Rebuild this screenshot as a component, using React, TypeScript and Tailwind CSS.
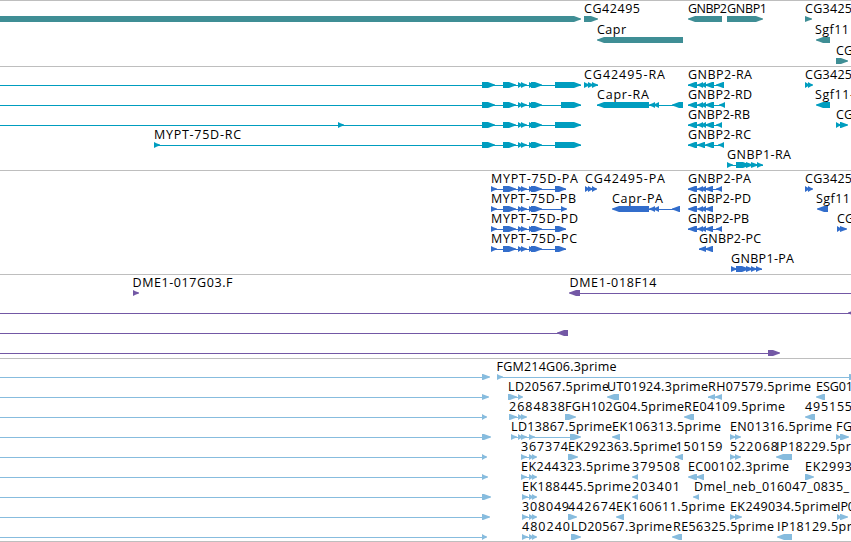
type Label = [x: number, text: string, width: number];
type Span = [start: number, end: number];

interface Row {
  labels?: Label[];
  lines?: Span[];
  // right and left are the strands the blocks point to
  right?: Span[];
  left?: Span[];
}

interface TrackProps {
  name: string;
  color: string;
  rows: Row[];
  height: number;
  rowHeight?: number;
  firstBaseline?: number;
}

const genes: Row[] = [
  {
    labels: [[584, "CG42495", 56], [688, "GNBP2", 39], [727, "GNBP1", 40], [805, "CG3425", 47]],
    right: [[-10, 581], [584, 598], [727, 763], [805, 812]],
    left: [[688, 722]],
  },
  {
    labels: [[597, "Capr", 29], [815, "Sgf11", 34]],
    left: [[597, 683], [816, 830]],
  },
  { labels: [[836, "CG", 17]], right: [[836, 848]] },
];

const exons: Span[] = [[482, 495], [503, 516], [518, 523], [521, 527], [529, 534], [531, 542]];

const transcripts: Row[] = [
  {
    labels: [[584, "CG42495-RA", 81], [688, "GNBP2-RA", 64], [805, "CG3425", 47]],
    lines: [[0, 581], [584, 598], [688, 724]],
    right: [...exons, [555, 581], [584, 590], [588, 594], [592, 598], [805, 810], [808, 813]],
    left: [[688, 697], [697, 703], [700, 706], [705, 714], [716, 724]],
  },
  {
    labels: [[597, "Capr-RA", 52], [688, "GNBP2-RD", 64], [815, "Sgf11-", 39]],
    lines: [[0, 581], [597, 683], [688, 725]],
    right: [...exons, [561, 581]],
    left: [[597, 649], [649, 655], [653, 659], [672, 683], [688, 697], [697, 703], [700, 706], [705, 714], [719, 725], [816, 830]],
  },
  {
    labels: [[688, "GNBP2-RB", 62], [836, "CG", 17]],
    lines: [[0, 581], [688, 722]],
    right: [[338, 344], ...exons, [555, 581], [836, 841], [840, 848]],
    left: [[688, 697], [697, 703], [700, 706], [705, 714], [716, 722]],
  },
  {
    labels: [[154, "MYPT-75D-RC", 87], [688, "GNBP2-RC", 63]],
    lines: [[154, 581], [688, 724]],
    right: [[154, 160], ...exons, [555, 581]],
    left: [[688, 697], [697, 705], [705, 714], [718, 724]],
  },
  {
    labels: [[727, "GNBP1-RA", 64]],
    lines: [[727, 763]],
    right: [[727, 733], [736, 750], [746, 753], [751, 758], [757, 763]],
  },
];

const codingExons: Span[] = [[491, 497], ...exons.slice(1)];

const proteins: Row[] = [
  {
    labels: [[491, "MYPT-75D-PA", 87], [585, "CG42495-PA", 80], [688, "GNBP2-PA", 63], [805, "CG3425", 47]],
    lines: [[491, 566], [688, 722]],
    right: [...codingExons, [555, 566], [585, 590], [588, 593], [592, 597], [805, 810], [808, 813]],
    left: [[688, 697], [697, 703], [700, 706], [705, 713], [716, 722]],
  },
  {
    labels: [[491, "MYPT-75D-PB", 85], [612, "Capr-PA", 51], [688, "GNBP2-PD", 63], [816, "Sgf11", 34]],
    lines: [[491, 566], [649, 680]],
    right: [...codingExons, [561, 567]],
    left: [[612, 649], [649, 655], [653, 659], [672, 680], [688, 697], [697, 703], [700, 706], [705, 713], [817, 828]],
  },
  {
    labels: [[491, "MYPT-75D-PD", 87], [688, "GNBP2-PB", 61], [837, "CG", 17]],
    lines: [[491, 566], [688, 722]],
    right: [...codingExons, [555, 566], [837, 842], [840, 847]],
    left: [[688, 697], [697, 703], [700, 706], [705, 713], [716, 722]],
  },
  {
    labels: [[491, "MYPT-75D-PC", 86], [699, "GNBP2-PC", 62]],
    lines: [[491, 566], [699, 713]],
    right: [...codingExons, [555, 566]],
    left: [[699, 706], [705, 713]],
  },
  {
    labels: [[731, "GNBP1-PA", 63]],
    lines: [[731, 762]],
    right: [[731, 737], [736, 749], [746, 753], [751, 757], [756, 762]],
  },
];

const clones: Row[] = [
  {
    labels: [[132.5, "DME1-017G03.F", 100], [569.5, "DME1-018F14", 87]],
    lines: [[575, 851]],
    right: [[133, 139]],
    left: [[569, 580]],
  },
  { lines: [[0, 851]], left: [[848, 860]] },
  { lines: [[0, 562]], left: [[557, 568]] },
  { lines: [[0, 775]], right: [[768, 780]] },
];

const ests: Row[] = [
  {
    labels: [[496.5, "FGM214G06.3prime", 120]],
    lines: [[0, 485], [497, 851]],
    right: [[482, 490], [497, 503], [849, 857]],
  },
  {
    labels: [[508, "LD20567.5prime", 101], [607, "UT01924.3prime", 101], [708, "RH07579.5prime", 103], [816, "ESG01", 37]],
    lines: [[0, 485], [508, 520], [708, 722]],
    right: [[482, 489], [508, 517], [518, 523]],
    left: [[607, 619], [708, 715], [715, 722], [816, 825]],
  },
  {
    labels: [[509, "2684838", 56], [565, "FGH102G04.5prime", 119], [684, "RE04109.5prime", 101], [805, "495155", 47]],
    lines: [[0, 485], [509, 524]],
    right: [[482, 487], [509, 517], [518, 523], [521, 527], [565, 576]],
    left: [[684, 694], [805, 815]],
  },
  {
    labels: [[511, "LD13867.5prime", 101], [612, "EK106313.5prime", 109], [730, "EN01316.5prime", 102], [836, "FG", 16]],
    lines: [[0, 485], [511, 575]],
    right: [[482, 491], [511, 517], [518, 523], [521, 527], [529, 535], [570, 581], [730, 736], [735, 741], [836, 841], [840, 849]],
    left: [[612, 620]],
  },
  {
    labels: [[521, "367374", 47], [568, "EK292363.5prime", 109], [675.5, "150159", 47], [730, "522068", 48], [776, "IP18229.5prime", 98]],
    lines: [[0, 485], [521, 533]],
    right: [[482, 487], [521, 527], [529, 534], [532, 537], [568, 578], [730, 736], [735, 741]],
    left: [[675, 683], [776, 792]],
  },
  {
    labels: [[521, "EK244323.5prime", 109], [632, "379508", 48], [688, "EC00102.3prime", 101], [805, "EK2993", 47]],
    lines: [[0, 485], [521, 533]],
    right: [[482, 488], [521, 527], [529, 534], [532, 537], [805, 814]],
    left: [[632, 638], [688, 697], [696, 704]],
  },
  {
    labels: [[522, "EK188445.5prime", 109], [632, "203401", 48], [694, "Dmel_neb_016047_0835_", 155]],
    lines: [[0, 485], [522, 533]],
    right: [[482, 491], [522, 528], [529, 534], [532, 537]],
    left: [[632, 638], [693, 699]],
  },
  {
    labels: [[522, "308049", 47], [568, "442674", 48], [616, "EK160611.5prime", 109], [730, "EK249034.5prime", 108], [837, "IP0", 18]],
    lines: [[0, 485], [522, 533]],
    right: [[482, 490], [522, 528], [529, 534], [532, 537], [568, 577], [730, 736], [735, 742], [837, 842], [840, 848]],
    left: [[616, 624]],
  },
  {
    labels: [[522, "480240", 48], [571, "LD20567.3prime", 101], [673, "RE56325.5prime", 101], [777, "IP18129.5prime", 98]],
    lines: [[0, 485], [522, 533]],
    right: [[482, 487], [522, 528], [529, 534], [532, 537], [571, 581]],
    left: [[672, 682], [777, 792]],
  },
];

// A block is six pixels high and narrows to a blunt point on the side it faces
function blockPoints([start, end]: Span, top: number, pointsLeft: boolean) {
  const width = end - start;
  const dir = pointsLeft ? -1 : 1;
  const tail = pointsLeft ? end : start;
  const tip = pointsLeft ? start : end;
  const neck = tip - dir * Math.min(width, 7);
  const cheek = tip - dir * Math.min(width / 2, 3);
  return [
    `${tail},${top}`,
    `${neck},${top}`,
    `${cheek},${top + 1.4}`,
    `${tip},${top + 2.5}`,
    `${tip},${top + 3.5}`,
    `${cheek},${top + 4.6}`,
    `${neck},${top + 6}`,
    `${tail},${top + 6}`,
  ].join(" ");
}

function Track({ name, color, rows, height, rowHeight = 20, firstBaseline = 12 }: TrackProps) {
  return (
    <section className="border-t border-[#bebebe]" aria-label={name}>
      <svg width={851} height={height} className="block overflow-hidden">
        {rows.map((row, i) => {
          const baseline = firstBaseline + i * rowHeight;
          const top = baseline + 3;
          return (
            <g key={i} fill={color}>
              {row.lines?.map(([start, end], n) => (
                <rect key={n} x={start} y={top + 3} width={end - start} height={1} />
              ))}
              {row.right?.map((span, n) => (
                <polygon key={n} points={blockPoints(span, top, false)} />
              ))}
              {row.left?.map((span, n) => (
                <polygon key={n} points={blockPoints(span, top, true)} />
              ))}
              {row.labels?.map(([x, text, width]) => (
                <text key={x} x={x} y={baseline} textLength={width} fill="#000">
                  {text}
                </text>
              ))}
            </g>
          );
        })}
      </svg>
    </section>
  );
}

function App() {
  return (
    <main className="w-[851px] h-[542px] overflow-hidden bg-white border-b border-[#bebebe] font-['Open_Sans','DejaVu_Sans',sans-serif] text-[12.5px]">
      <Track name="Genes" color="#3f8e95" rows={genes} height={65} rowHeight={21} />
      <Track name="Transcripts" color="#009dbf" rows={transcripts} height={103} />
      <Track name="Proteins" color="#326dcb" rows={proteins} height={103} />
      <Track name="Clones" color="#7358a5" rows={clones} height={83} />
      <Track name="ESTs" color="#87bcde" rows={ests} height={182} />
    </main>
  );
}

export default App;
